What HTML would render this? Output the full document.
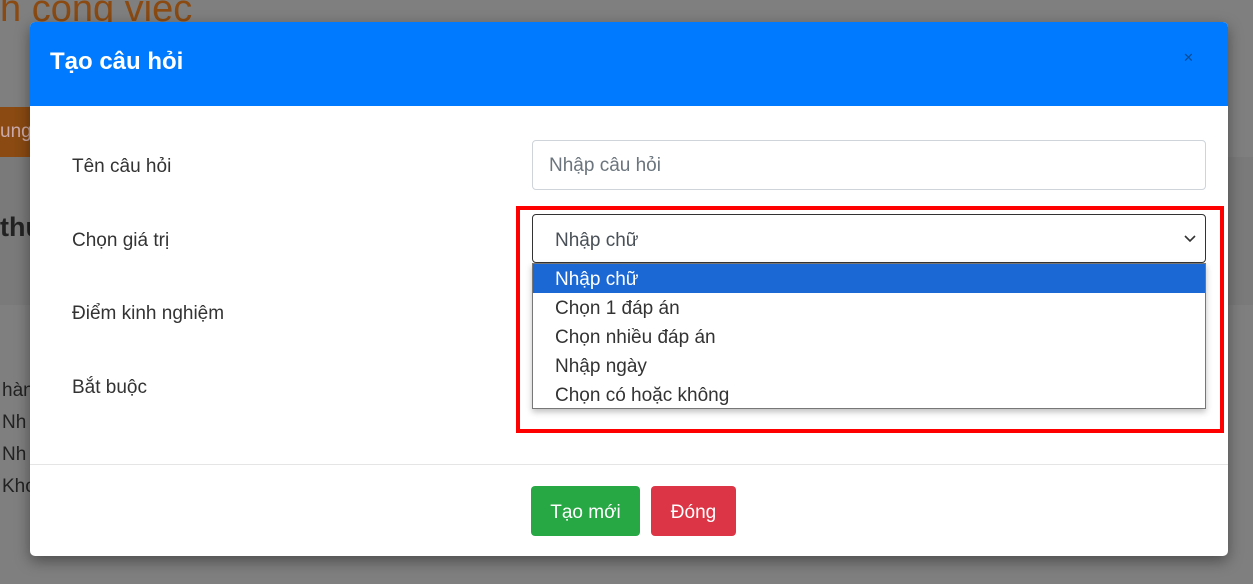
<!DOCTYPE html>
<html><head><meta charset="utf-8"><style>
body{margin:0;width:1253px;height:584px;overflow:hidden;position:relative;background:#7f7f7f;font-family:"Liberation Sans","DejaVu Sans",sans-serif;}
.bg{position:absolute;}
.modal{position:absolute;left:30px;top:22px;width:1198px;height:534px;background:#fff;border-radius:5px;overflow:hidden;box-shadow:0 5px 15px rgba(0,0,0,.4);}
.hdr{height:84px;background:#007bff;color:#fff;font-size:24px;font-weight:bold;line-height:80px;padding-left:20px;}
.x{position:absolute;left:1153px;top:28px;color:#0a4c94;font-size:13px;font-weight:bold;}
.lbl{position:absolute;left:42px;font-size:19px;color:#333;}
.inp{position:absolute;left:502px;width:674px;height:50px;border:1px solid #ced4da;border-radius:4px;box-sizing:border-box;font-size:19px;color:#6c757d;line-height:50px;padding-left:16px;}
.red{position:absolute;left:486px;top:184px;width:708px;height:227px;border:4px solid #ff0000;box-sizing:border-box;}
.sel{position:absolute;left:502px;top:192px;width:674px;height:49px;border:1px solid #333;border-radius:4px;box-sizing:border-box;font-size:19px;color:#495057;line-height:52px;padding-left:22px;}
.dd{position:absolute;left:502px;top:241px;width:674px;height:146px;border:1px solid #777;box-sizing:border-box;background:#fff;box-shadow:0 3px 6px rgba(0,0,0,.25);}
.dd div{height:29px;line-height:32px;font-size:19px;color:#333;padding-left:22px;}
.dd .on{background:#1b67d4;color:#fff;}
.ft{position:absolute;left:0;top:442px;width:100%;border-top:1px solid #e5e5e5;}
.btn{position:absolute;top:464px;height:50px;border-radius:4px;color:#fff;font-size:19px;line-height:53px;text-align:center;}
</style></head><body>
<div class="bg" style="left:0;top:-12px;font-size:38px;color:#8a4a12;">h công việc</div>
<div class="bg" style="left:0;top:107px;width:30px;height:50px;background:#8a4a12;color:#caa;font-size:19px;line-height:50px;">ung</div>
<div class="bg" style="left:0;top:157px;width:1253px;height:148px;background:#7a7a7a;"></div>
<div class="bg" style="left:0;top:212px;font-size:27px;color:#222;font-weight:bold;">thu</div>
<div class="bg" style="left:2px;top:375px;font-size:19px;color:#222;line-height:32px;">hàn<br>Nh<br>Nh<br>Kho</div>
<div class="modal">
<div class="hdr">Tạo câu hỏi</div>
<div class="x">✕</div>
<div class="lbl" style="top:134px">Tên câu hỏi</div>
<div class="lbl" style="top:208px">Chọn giá trị</div>
<div class="lbl" style="top:281px">Điểm kinh nghiệm</div>
<div class="lbl" style="top:355px">Bắt buộc</div>
<div class="inp" style="top:118px">Nhập câu hỏi</div>
<div class="red"></div>
<div class="sel">Nhập chữ<svg style="position:absolute;right:8px;top:19px" width="14" height="10" viewBox="0 0 14 10"><path d="M2 2l5 5 5-5" fill="none" stroke="#333" stroke-width="1.6"/></svg></div>
<div class="dd"><div class="on">Nhập chữ</div><div>Chọn 1 đáp án</div><div>Chọn nhiều đáp án</div><div>Nhập ngày</div><div>Chọn có hoặc không</div></div>
<div class="ft"></div>
<div class="btn" style="left:501px;width:109px;background:#28a745">Tạo mới</div>
<div class="btn" style="left:621px;width:85px;background:#dc3545">Đóng</div>
</div>
</body></html>
